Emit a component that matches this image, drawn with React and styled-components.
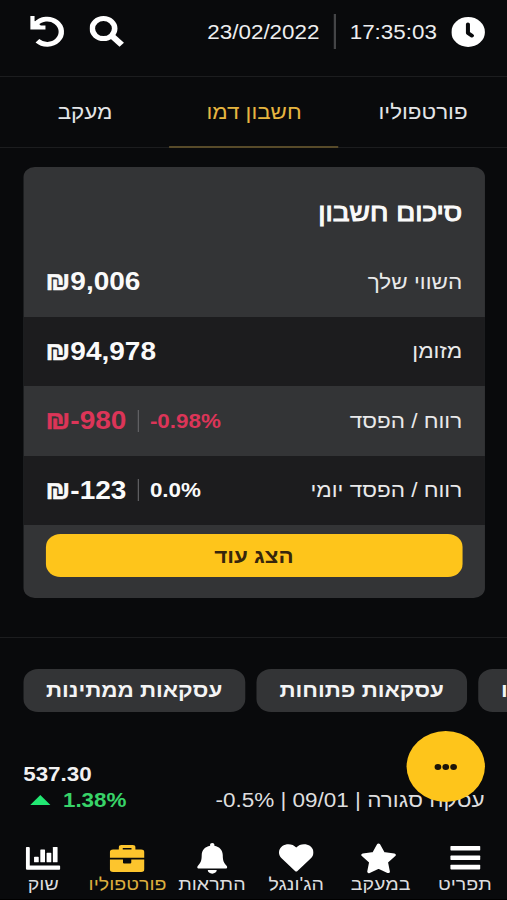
import React, { useState } from 'react';
import styled, { createGlobalStyle } from 'styled-components';

// the phone view is drawn wider than it is laid out
const STRETCH = 1.12;

const tabs = [
  { key: 'portfolio', label: 'פורטפוליו' },
  { key: 'demo', label: 'חשבון דמו' },
  { key: 'watch', label: 'מעקב' },
];

const summary = [
  { id: 1, label: 'השווי שלך', amount: '9,006' },
  { id: 2, label: 'מזומן', amount: '94,978' },
  { id: 3, label: 'רווח / הפסד', amount: '-980', percent: '-0.98%', negative: true },
  { id: 4, label: 'רווח / הפסד יומי', amount: '-123', percent: '0.0%' },
];

const chips = ['עסקאות ממתינות', 'עסקאות פתוחות', 'פורטפוליו'];

const ClockIcon = () => (
  <svg viewBox="0 0 30 30" width="30" height="30">
    <circle cx="15" cy="15" r="15" fill="#fff" />
    <path d="M14.800 7.300V16l3.600 2.700" fill="none" stroke="#090a0c" strokeWidth="3.600" strokeLinecap="round" strokeLinejoin="round" />
  </svg>
);

const SearchIcon = () => (
  <svg viewBox="0 0 31 31" width="31" height="31" fill="none" stroke="currentColor">
    <circle cx="12.400" cy="12.600" r="10" strokeWidth="5" />
    <path d="M19.500 19.500l9.200 9.200" strokeWidth="5.600" />
  </svg>
);

const UndoIcon = () => (
  <svg viewBox="0 0 31 31" width="31" height="31" fill="none" stroke="currentColor">
    <path d="M6.400 24.800A12.600 12.600 0 1 0 5.200 8" strokeWidth="4.800" />
    <path d="M1.900 0v11.500h11.700" strokeWidth="3.900" />
    <path d="M2 4.500l4.500 1.500 3 4-4.500 2-3-1z" fill="currentColor" stroke="none" />
  </svg>
);

const MenuIcon = () => (
  <svg viewBox="0 0 27 24" width="27" height="24" fill="currentColor">
    <rect width="27" height="4.600" rx="0.800" />
    <rect y="9.400" width="27" height="4.600" rx="0.800" />
    <rect y="18.800" width="27" height="4.600" rx="0.800" />
  </svg>
);

const StarIcon = () => (
  <svg viewBox="0 0 32 31" width="32" height="31" fill="currentColor" stroke="currentColor" strokeWidth="3" strokeLinejoin="round">
    <path d="M16 2l4.200 8.500 9.700 1.500-7 6.900 1.700 9.700L16 24.200l-8.600 4.400 1.700-9.700L2.100 12l9.700-1.500z" />
  </svg>
);

const HeartIcon = () => (
  <svg viewBox="0 0 31 28" width="31" height="28" fill="currentColor">
    <path d="M15.500 3.600C18.500-.4 24.300-.8 27.900 2.100c3.800 3.200 4 8.700.7 12.200L16.600 27a1.500 1.500 0 0 1-2.200 0L2.400 14.300C-.9 10.800-.7 5.300 3.100 2.100 6.700-.8 12.500-.4 15.500 3.600z" />
  </svg>
);

const BellIcon = () => (
  <svg viewBox="0 0 27 31" width="27" height="31" fill="currentColor">
    <path d="M13.500 0c1.200 0 1.900.8 1.900 1.800v.9c4.600.9 7.500 4.500 7.500 9.400 0 5.600 1 8.200 3.200 10.300 1.600 1.600.8 3.200-.9 3.200H1.800c-1.700 0-2.500-1.600-.9-3.200 2.200-2.100 3.200-4.700 3.200-10.300 0-4.900 2.900-8.500 7.500-9.400v-.9c0-1 .7-1.800 1.900-1.800z" />
    <path d="M9.500 26.900h8a4 3.800 0 0 1-8 0z" />
  </svg>
);

const ChartIcon = () => (
  <svg viewBox="0 0 31 23" width="31" height="23" fill="currentColor">
    <path d="M1 0h1.600a1 1 0 0 1 1 1v17.500h26.200a1 1 0 0 1 1 1v2.300a1 1 0 0 1-1 1H1.500A1.500 1.500 0 0 1 0 21.300V1a1 1 0 0 1 1-1z" />
    <rect x="7.400" y="9.800" width="4.200" height="5.500" rx="0.600" />
    <rect x="13" y="2.500" width="4.200" height="12.800" rx="0.600" />
    <rect x="18.600" y="5.800" width="4.200" height="9.500" rx="0.600" />
    <rect x="24.200" y="0" width="4.200" height="15.300" rx="0.600" />
  </svg>
);

const CaseIcon = () => (
  <svg viewBox="0 0 31 27" width="31" height="27" fill="currentColor">
    <path
      fillRule="evenodd"
      d="M10.500 0h10a2.400 2.400 0 0 1 2.400 2.400V4.400H28a3 3 0 0 1 3 3v5.400H0V7.400a3 3 0 0 1 3-3h5.100V2.400A2.400 2.400 0 0 1 10.500 0zM11.600 2.900v1.500h7.800V2.900z"
    />
    <path d="M0 14.600h11.800v3a1 1 0 0 0 1 1h5.400a1 1 0 0 0 1-1v-3H31V24a3 3 0 0 1-3 3H3a3 3 0 0 1-3-3z" />
  </svg>
);

const navItems = [
  { key: 'menu', label: 'תפריט', icon: <MenuIcon /> },
  { key: 'follow', label: 'במעקב', icon: <StarIcon />, shift: 3 },
  { key: 'jungle', label: "הג'ונגל", icon: <HeartIcon /> },
  { key: 'alerts', label: 'התראות', icon: <BellIcon /> },
  { key: 'portfolio', label: 'פורטפוליו', icon: <CaseIcon /> },
  { key: 'market', label: 'שוק', icon: <ChartIcon /> },
];

const App = () => {
  const [tab, setTab] = useState('demo');
  return (
    <>
      <GlobalStyle />
      <Screen>
        <Header>
          <Clock>
            <ClockIcon />
            <Stamp>17:35:03</Stamp>
            <HeaderLine />
            <Stamp>23/02/2022</Stamp>
          </Clock>
          <Actions>
            <SearchIcon />
            <UndoIcon />
          </Actions>
        </Header>
        <TabBar>
          {tabs.map(t => (
            <Tab key={t.key} $active={tab === t.key} onClick={() => setTab(t.key)}>
              {t.label}
            </Tab>
          ))}
        </TabBar>
        <Card>
          <CardTitle>סיכום חשבון</CardTitle>
          {summary.map((row, i) => (
            <Row key={row.id} $dark={i % 2 === 1}>
              <Label>{row.label}</Label>
              <Values $negative={row.negative}>
                <Amount>
                  <Shekel>₪</Shekel>
                  {row.amount}
                </Amount>
                {row.percent && <Percent>{row.percent}</Percent>}
              </Values>
            </Row>
          ))}
          <MoreBtn>הצג עוד</MoreBtn>
        </Card>
        <Chips>
          {chips.map(c => (
            <Chip key={c}>{c}</Chip>
          ))}
        </Chips>
        <Deal>
          <Price>537.30</Price>
          <DealRow>
            <Change>
              <Triangle />
              1.38%
            </Change>
            <Info>-0.5% | 09/01 | עסקה סגורה</Info>
          </DealRow>
        </Deal>
        <Fab>
          <Dot />
          <Dot />
          <Dot />
        </Fab>
        <Nav>
          {navItems.map(n => (
            <NavItem key={n.key} $active={n.key === 'portfolio'}>
              <NavIcon $active={n.key === 'portfolio'} $shift={n.shift}>{n.icon}</NavIcon>
              <span>{n.label}</span>
            </NavItem>
          ))}
        </Nav>
      </Screen>
    </>
  );
};

const GlobalStyle = createGlobalStyle`
  * {
    box-sizing: border-box;
  }
  body {
    margin: 0;
    background: #090a0c;
    overflow: hidden;
  }
  svg {
    display: block;
    flex: none;
  }
`;
const Screen = styled.div`
  position: relative;
  direction: rtl;
  display: flex;
  flex-direction: column;
  width: calc(507px / ${STRETCH});
  height: 900px;
  overflow: hidden;
  transform: scaleX(${STRETCH});
  transform-origin: 0 0;
  background: #090a0c;
  color: #f1f1f2;
  font-family: 'Liberation Sans', Arial, sans-serif;
  font-size: 20px;
  white-space: nowrap;
`;
const Button = styled.button`
  padding: 0;
  border: none;
  font-family: inherit;
  font-size: 20px;
  cursor: pointer;
`;
const Header = styled.header`
  display: flex;
  justify-content: space-between;
  height: 77px;
  padding: 0 20px 13px 27px;
  border-bottom: 1px solid #1c1d1f;
`;
const Clock = styled.div`
  display: flex;
  align-items: center;
  color: #fff;
`;
const Stamp = styled.span`
  margin: 2px 12.6px 0 12.4px;
  color: #eeeeef;
`;
const HeaderLine = styled.div`
  width: 2px;
  height: 35px;
  background: #444547;
`;
const Actions = styled.div`
  display: flex;
  align-items: center;
  gap: 22px;
  color: #fff;
`;
const TabBar = styled.nav`
  display: flex;
  height: 71px;
  border-bottom: 1px solid #1c1d1f;
`;
const Tab = styled(Button)`
  flex: 1;
  height: 71px;
  padding: 1px 0 0 1px;
  background: none;
  color: ${({ $active }) => ($active ? '#e6b540' : '#e4e5e7')};
  border-bottom: 2px solid ${({ $active }) => ($active ? '#574a29' : 'transparent')};
`;
const Card = styled.section`
  display: flex;
  flex-direction: column;
  height: 431px;
  margin: 19px 20px 0 20.7px;
  border-radius: 10px;
  overflow: hidden;
  background: #333436;
`;
const CardTitle = styled.h2`
  height: 80px;
  margin: 0;
  padding: 0 20px;
  font-size: 25px;
  font-weight: normal;
  line-height: 90px;
  color: #fafafa;
  -webkit-text-stroke: 1px currentColor;
`;
const Row = styled.div`
  display: flex;
  align-items: center;
  justify-content: space-between;
  height: 69.5px;
  padding: 0 20px;
  background: ${({ $dark }) => ($dark ? '#1c1c1e' : 'transparent')};
`;
const Label = styled.span`
  padding-top: 1px;
  font-size: 20.1px;
  color: #e9e9ea;
`;
const Values = styled.div`
  direction: ltr;
  display: flex;
  align-items: center;
  font-weight: bold;
  color: ${({ $negative }) => ($negative ? '#dc3558' : '#fafafa')};
`;
const Amount = styled.span`
  font-size: 25px;
`;
const Shekel = styled.span`
  -webkit-text-stroke: 0.6px currentColor;
`;
const Percent = styled.span`
  margin-left: 10px;
  padding: 1px 0 0 10px;
  border-left: 1px solid #66676a;
  line-height: 21px;
`;
const MoreBtn = styled(Button)`
  height: 43px;
  margin: 9px 20px 0;
  padding-top: 2px;
  border-radius: 13px;
  background: #fec51b;
  color: #37260c;
  font-weight: bold;
`;
const Chips = styled.div`
  direction: ltr;
  display: flex;
  flex: none;
  gap: 10.3px;
  margin-top: 39px;
  padding: 30.5px 0 0 20.6px;
  border-top: 1px solid #1c1d1f;
`;
const Chip = styled(Button)`
  flex: none;
  height: 43px;
  padding: 0 20.4px;
  border-radius: 13px;
  background: #333436;
  color: #f4f4f5;
  font-weight: bold;
`;
const Deal = styled.div`
  direction: ltr;
  margin-top: 49px;
  padding: 0 20px 0 20.7px;
`;
const Price = styled.div`
  font-weight: bold;
  line-height: 26px;
`;
const DealRow = styled.div`
  display: flex;
  justify-content: space-between;
  line-height: 27px;
`;
const Change = styled.div`
  display: flex;
  align-items: center;
  gap: 11.5px;
  padding-left: 6px;
  font-weight: bold;
  color: #38d368;
`;
const Triangle = styled.i`
  border: solid transparent;
  border-width: 0 9px 10px;
  border-bottom-color: #22e873;
`;
const Info = styled.div`
  font-size: 20.1px;
  color: #dededf;
`;
// floats over the deals list
const Fab = styled(Button)`
  position: absolute;
  right: 20px;
  bottom: 98px;
  display: flex;
  align-items: center;
  justify-content: center;
  gap: 1px;
  width: 70px;
  height: 71px;
  border-radius: 50%;
  background: #fec51b;
`;
const Dot = styled.i`
  width: 6px;
  height: 6px;
  border-radius: 50%;
  background: #1c1408;
`;
const Nav = styled.nav`
  display: flex;
  height: 61px;
  margin-top: auto;
  padding-left: 1px;
  border-bottom: 1px solid #000;
`;
const NavItem = styled.div`
  display: flex;
  flex: 1 1 0;
  min-width: 0;
  flex-direction: column;
  align-items: center;
  font-size: 17.5px;
  line-height: 20px;
  color: ${({ $active }) => ($active ? '#dcae3e' : '#dcdddf')};
`;
const NavIcon = styled.div`
  display: flex;
  align-items: center;
  height: 35px;
  padding-top: 3px;
  padding-right: ${({ $shift }) => $shift || 0}px;
  color: ${({ $active }) => ($active ? '#fdc52d' : '#fff')};
`;

export default App;
